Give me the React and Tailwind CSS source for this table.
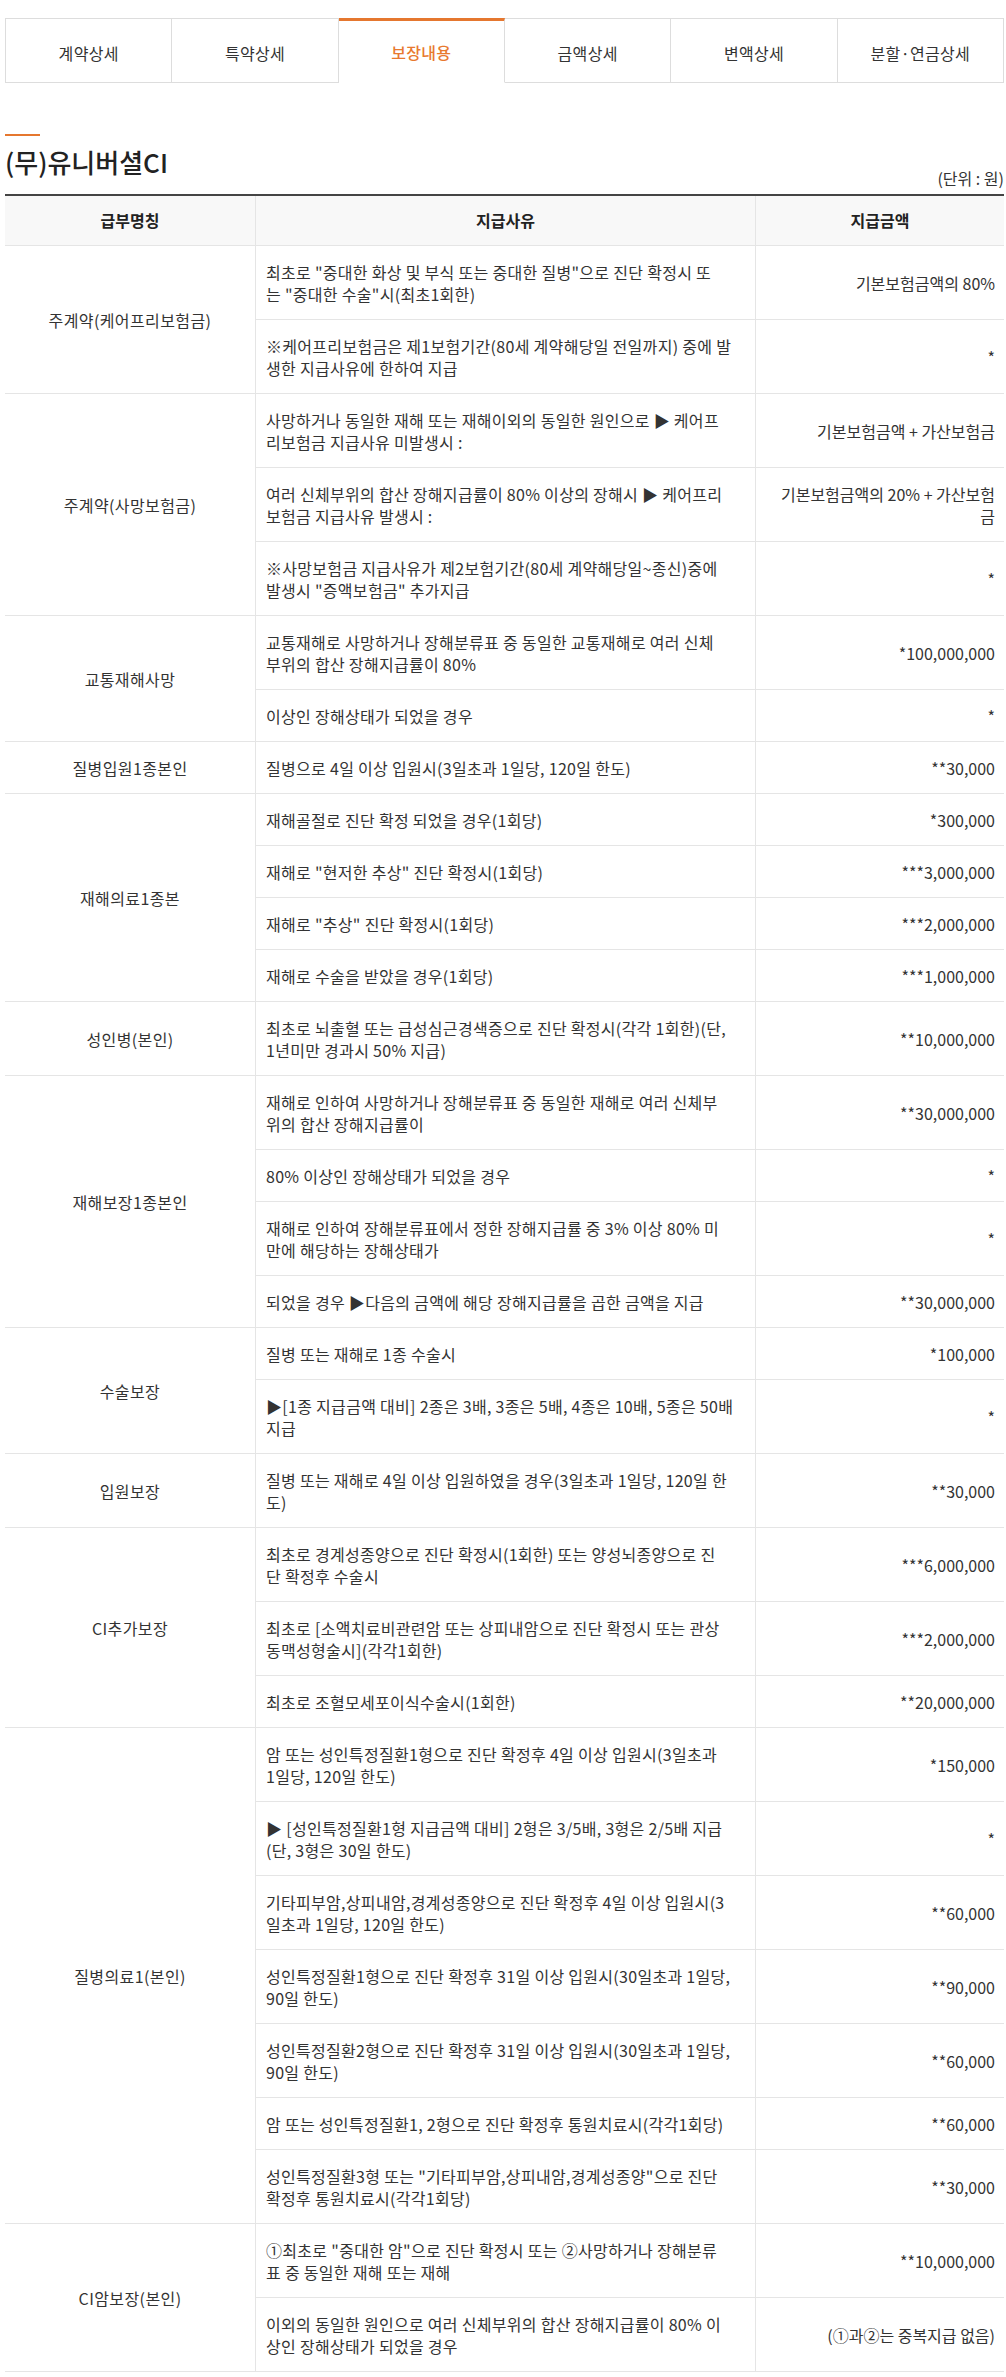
import React from 'react';

const tabs = ['계약상세', '특약상세', '보장내용', '금액상세', '변액상세', '분할·연금상세'];

const groups = [
  {
    name: '주계약(케어프리보험금)',
    items: [
      [['최초로 "중대한 화상 및 부식 또는 중대한 질병"으로 진단 확정시 또', '는 "중대한 수술"시(최초1회한)'], ['기본보험금액의 80%']],
      [['※케어프리보험금은 제1보험기간(80세 계약해당일 전일까지) 중에 발', '생한 지급사유에 한하여 지급'], ['*']],
    ],
  },
  {
    name: '주계약(사망보험금)',
    items: [
      [['사망하거나 동일한 재해 또는 재해이외의 동일한 원인으로 ▶ 케어프', '리보험금 지급사유 미발생시 :'], ['기본보험금액 + 가산보험금']],
      [['여러 신체부위의 합산 장해지급률이 80% 이상의 장해시 ▶ 케어프리', '보험금 지급사유 발생시 :'], ['기본보험금액의 20% + 가산보험', '금']],
      [['※사망보험금 지급사유가 제2보험기간(80세 계약해당일~종신)중에', '발생시 "증액보험금" 추가지급'], ['*']],
    ],
  },
  {
    name: '교통재해사망',
    items: [
      [['교통재해로 사망하거나 장해분류표 중 동일한 교통재해로 여러 신체', '부위의 합산 장해지급률이 80%'], ['*100,000,000']],
      [['이상인 장해상태가 되었을 경우'], ['*']],
    ],
  },
  {
    name: '질병입원1종본인',
    items: [[['질병으로 4일 이상 입원시(3일초과 1일당, 120일 한도)'], ['**30,000']]],
  },
  {
    name: '재해의료1종본',
    items: [
      [['재해골절로 진단 확정 되었을 경우(1회당)'], ['*300,000']],
      [['재해로 "현저한 추상" 진단 확정시(1회당)'], ['***3,000,000']],
      [['재해로 "추상" 진단 확정시(1회당)'], ['***2,000,000']],
      [['재해로 수술을 받았을 경우(1회당)'], ['***1,000,000']],
    ],
  },
  {
    name: '성인병(본인)',
    items: [[['최초로 뇌출혈 또는 급성심근경색증으로 진단 확정시(각각 1회한)(단,', '1년미만 경과시 50% 지급)'], ['**10,000,000']]],
  },
  {
    name: '재해보장1종본인',
    items: [
      [['재해로 인하여 사망하거나 장해분류표 중 동일한 재해로 여러 신체부', '위의 합산 장해지급률이'], ['**30,000,000']],
      [['80% 이상인 장해상태가 되었을 경우'], ['*']],
      [['재해로 인하여 장해분류표에서 정한 장해지급률 중 3% 이상 80% 미', '만에 해당하는 장해상태가'], ['*']],
      [['되었을 경우 ▶다음의 금액에 해당 장해지급률을 곱한 금액을 지급'], ['**30,000,000']],
    ],
  },
  {
    name: '수술보장',
    items: [
      [['질병 또는 재해로 1종 수술시'], ['*100,000']],
      [['▶[1종 지급금액 대비] 2종은 3배, 3종은 5배, 4종은 10배, 5종은 50배', '지급'], ['*']],
    ],
  },
  {
    name: '입원보장',
    items: [[['질병 또는 재해로 4일 이상 입원하였을 경우(3일초과 1일당, 120일 한', '도)'], ['**30,000']]],
  },
  {
    name: 'CI추가보장',
    items: [
      [['최초로 경계성종양으로 진단 확정시(1회한) 또는 양성뇌종양으로 진', '단 확정후 수술시'], ['***6,000,000']],
      [['최초로 [소액치료비관련암 또는 상피내암으로 진단 확정시 또는 관상', '동맥성형술시](각각1회한)'], ['***2,000,000']],
      [['최초로 조혈모세포이식수술시(1회한)'], ['**20,000,000']],
    ],
  },
  {
    name: '질병의료1(본인)',
    items: [
      [['암 또는 성인특정질환1형으로 진단 확정후 4일 이상 입원시(3일초과', '1일당, 120일 한도)'], ['*150,000']],
      [['▶ [성인특정질환1형 지급금액 대비] 2형은 3/5배, 3형은 2/5배 지급', '(단, 3형은 30일 한도)'], ['*']],
      [['기타피부암,상피내암,경계성종양으로 진단 확정후 4일 이상 입원시(3', '일초과 1일당, 120일 한도)'], ['**60,000']],
      [['성인특정질환1형으로 진단 확정후 31일 이상 입원시(30일초과 1일당,', '90일 한도)'], ['**90,000']],
      [['성인특정질환2형으로 진단 확정후 31일 이상 입원시(30일초과 1일당,', '90일 한도)'], ['**60,000']],
      [['암 또는 성인특정질환1, 2형으로 진단 확정후 통원치료시(각각1회당)'], ['**60,000']],
      [['성인특정질환3형 또는 "기타피부암,상피내암,경계성종양"으로 진단', '확정후 통원치료시(각각1회당)'], ['**30,000']],
    ],
  },
  {
    name: 'CI암보장(본인)',
    items: [
      [['①최초로 "중대한 암"으로 진단 확정시 또는 ②사망하거나 장해분류', '표 중 동일한 재해 또는 재해'], ['**10,000,000']],
      [['이외의 동일한 원인으로 여러 신체부위의 합산 장해지급률이 80% 이', '상인 장해상태가 되었을 경우'], ['(①과②는 중복지급 없음)']],
    ],
  },
];

// written out in full so tailwind picks them up
const spanClass = {
  1: 'row-span-1',
  2: 'row-span-2',
  3: 'row-span-3',
  4: 'row-span-4',
  7: 'row-span-7',
};

const Lines = ({ lines }) =>
  lines.map((line, i) => (
    <React.Fragment key={i}>
      {i > 0 && <br />}
      {line}
    </React.Fragment>
  ));

export default function App() {
  return (
    <div className="bg-white text-[#333] font-['Noto_Sans_CJK_KR',sans-serif] pt-[18px] pb-[6px] pl-[5px] pr-[2px]">
      {/* Tabs */}
      <ul className="flex">
        {tabs.map((tab, i) => {
          const active = tab === '보장내용';
          return (
            <li
              key={tab}
              className={
                active
                  ? 'flex-1 h-[65px] flex items-center justify-center border-r border-[#ddd] border-t-[3px] border-t-[#e5772f] border-b border-b-white pt-[1px] text-[16px] tracking-[0.3px] text-[#e8792f] font-medium'
                  : `flex-1 h-[65px] flex items-center justify-center border-t border-b border-r border-[#ddd] pt-[4px] text-[16px] tracking-[0.3px] text-[#333] ${i === 0 ? 'border-l' : ''}`
              }
            >
              {tab}
            </li>
          );
        })}
      </ul>

      {/* Title */}
      <div className="mt-[51px]">
        <div className="w-[35px] h-[2px] bg-[#e5772f]" />
        <div className="flex justify-between items-end">
          <h2 className="mt-[9px] mb-[10px] text-[26px] leading-[34px] font-medium text-[#222]">(무)유니버셜CI</h2>
          <span className="text-[16px] leading-[22px] text-[#333]">(단위 : 원)</span>
        </div>
      </div>

      {/* Table */}
      <div className="mt-[5px] border-t-2 border-[#444] grid grid-cols-[250px_500px_249px] text-[16px] leading-[22px]">
        <div className="bg-[#f8f8f8] border-b border-[#e5e5e5] pt-[13px] pb-[14px] text-center font-semibold text-[#222]">급부명칭</div>
        <div className="bg-[#f8f8f8] border-b border-l border-[#e5e5e5] pt-[13px] pb-[14px] text-center font-semibold text-[#222]">지급사유</div>
        <div className="bg-[#f8f8f8] border-b border-l border-[#e5e5e5] pt-[13px] pb-[14px] text-center font-semibold text-[#222]">지급금액</div>

        {groups.map((group) => (
          <React.Fragment key={group.name}>
            <div className={`${spanClass[group.items.length]} col-start-1 flex items-center justify-center border-b border-[#e5e5e5] px-[10px] text-center tracking-[0.4px]`}>
              {group.name}
            </div>
            {group.items.map(([reason, amount], j) => (
              <React.Fragment key={j}>
                <div className="col-start-2 flex items-center border-b border-l border-[#e5e5e5] pl-[10px] pr-[2px] pt-[15px] pb-[14px] tracking-[0.3px]">
                  <p className="whitespace-nowrap">
                    <Lines lines={reason} />
                  </p>
                </div>
                <div className="col-start-3 flex items-center justify-end text-right border-b border-l border-[#e5e5e5] pl-[8px] pr-[9px] pt-[15px] pb-[14px]">
                  <p className="whitespace-nowrap">
                    <Lines lines={amount} />
                  </p>
                </div>
              </React.Fragment>
            ))}
          </React.Fragment>
        ))}
      </div>
    </div>
  );
}
